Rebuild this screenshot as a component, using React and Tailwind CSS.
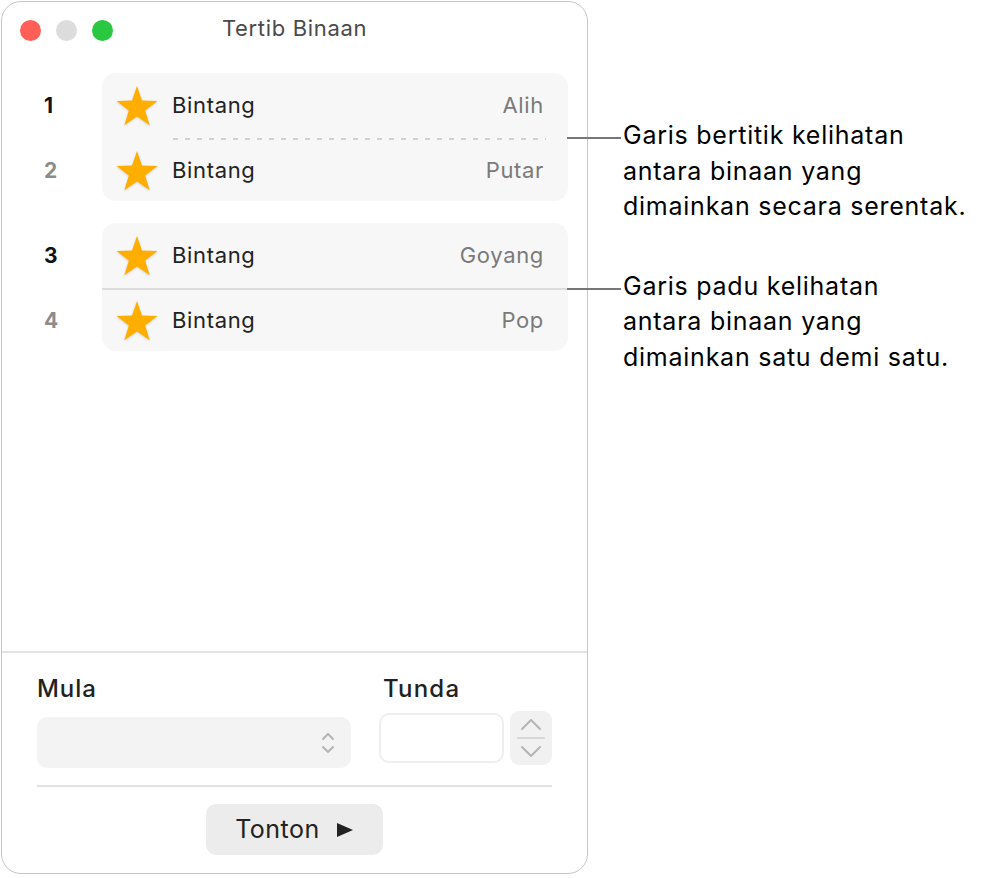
import { Fragment } from 'react';

const font = { fontFamily: 'Inter, "Noto Sans", sans-serif' };

function Star() {
  return (
    <svg width="42" height="40" viewBox="0 0 42 40" className="shrink-0 drop-shadow-[0_1px_1px_rgba(0,0,0,0.15)]">
      <path d="M21 0 L26 14.6 L41.5 14.9 L29.2 24.4 L33.7 39.3 L21 30.4 L8.3 39.3 L12.8 24.4 L0.5 14.9 L16 14.6 Z" fill="#FFAE00" />
    </svg>
  );
}

const groups = [
  {
    dashed: true,
    rows: [
      { n: '1', active: true, name: 'Bintang', fx: 'Alih' },
      { n: '2', active: false, name: 'Bintang', fx: 'Putar' },
    ],
  },
  {
    dashed: false,
    rows: [
      { n: '3', active: true, name: 'Bintang', fx: 'Goyang' },
      { n: '4', active: false, name: 'Bintang', fx: 'Pop' },
    ],
  },
];

function Group({ group }) {
  const heights = ['h-[65px]', 'h-[61px]'];
  return (
    <div className="flex">
      {/* numbers */}
      <div className="w-[100px] flex flex-col">
        {group.rows.map((r, i) => (
          <Fragment key={r.n}>
            <div className={`${heights[i]} flex items-center pl-[42px] text-[21px] font-bold ${r.active ? 'text-[#111]' : 'text-[#8c8c8c]'}`}>
              {r.n}
            </div>
            {i === 0 && <div className="h-[2px]" />}
          </Fragment>
        ))}
      </div>
      {/* card */}
      <div className="w-[466px] rounded-[14px] bg-[#f7f7f7] flex flex-col">
        {group.rows.map((r, i) => (
          <Fragment key={r.n}>
            <div className={`${heights[i]} flex items-center pl-[14px] pr-[24px]`}>
              <Star />
              <span className="ml-[14px] text-[22px] tracking-[0.03em] text-[#222]">{r.name}</span>
              <span className="ml-auto text-[22px] tracking-[0.03em] text-[#7a7a7a]">{r.fx}</span>
            </div>
            {i === 0 &&
              (group.dashed ? (
                <div className="h-[2px] ml-[71px] mr-[22px]">
                  <svg width="100%" height="2" className="block">
                    <line x1="0" y1="1" x2="100%" y2="1" stroke="#c4c4c4" strokeWidth="1.5" strokeDasharray="5 7" />
                  </svg>
                </div>
              ) : (
                <div className="h-[2px] bg-[#dddddd]" />
              ))}
          </Fragment>
        ))}
      </div>
    </div>
  );
}

function Callout({ lines, className }) {
  return (
    <div className={`flex items-start ${className}`}>
      <div className="w-[54px] h-[2px] bg-[#777] shrink-0 mt-[19px]" />
      <div className="ml-[2px] text-[25px] tracking-[0.03em] leading-[35.5px] text-black">
        {lines.map((l) => (
          <div key={l} className="whitespace-nowrap">{l}</div>
        ))}
      </div>
    </div>
  );
}

export default function App() {
  return (
    <div className="w-[987px] h-[878px] bg-white flex items-start" style={font}>
      {/* window */}
      <div className="ml-[1px] mt-[1px] w-[587px] h-[873px] rounded-[20px] border border-[#c6c6c6] bg-white flex flex-col shrink-0 overflow-hidden relative z-0">
        {/* title bar */}
        <div className="h-[54px] flex items-center relative">
          <div className="flex items-center gap-[15px] pl-[18px] pt-[2px]">
            <div className="w-[21px] h-[21px] rounded-full bg-[#ff5f57]" />
            <div className="w-[21px] h-[21px] rounded-full bg-[#dcdcdc]" />
            <div className="w-[21px] h-[21px] rounded-full bg-[#2ac840]" />
          </div>
          <div className="absolute inset-x-0 top-[10px] text-center text-[22px] tracking-[0.03em] text-[#4a4a4a]">Tertib Binaan</div>
        </div>

        {/* build list */}
        <div className="mt-[17px] flex flex-col gap-[22px]">
          {groups.map((g, i) => (
            <Group key={i} group={g} />
          ))}
        </div>

        <div className="flex-1" />

        {/* bottom controls */}
        <div className="h-[2px] bg-[#e3e3e3]" />
        <div className="px-[35px] pt-[20px] pb-[18px]">
          <div className="flex">
            <div className="w-[315px] flex flex-col">
              <div className="text-[24px] font-medium tracking-[0.04em] text-[#222] leading-[32px]">Mula</div>
              <div className="mt-[12px] h-[51px] rounded-[10px] bg-[#f3f3f3] flex items-center justify-end pr-[16px]">
                <svg width="14" height="24" viewBox="0 0 14 24" fill="none" stroke="#b3b3b3" strokeWidth="2" strokeLinecap="round" strokeLinejoin="round">
                  <path d="M2 8 L7 3 L12 8" />
                  <path d="M2 16 L7 21 L12 16" />
                </svg>
              </div>
            </div>
            <div className="ml-[28px] flex flex-col">
              <div className="ml-[4px] text-[24px] font-medium tracking-[0.05em] text-[#222] leading-[32px]">Tunda</div>
              <div className="mt-[6px] flex items-start">
                <div className="mt-[2px] w-[125px] h-[50px] rounded-[10px] border-2 border-[#eeeeee] bg-white" />
                <div className="ml-[6px] w-[42px] h-[54px] rounded-[9px] bg-[#f1f1f1] flex flex-col items-center justify-center">
                  <svg width="30" height="48" viewBox="0 0 30 48" fill="none" stroke="#b5b5b5" strokeWidth="2" strokeLinecap="round" strokeLinejoin="round">
                    <path d="M6 15 L15 6 L24 15" />
                    <line x1="2" y1="24" x2="28" y2="24" stroke="#d6d6d6" />
                    <path d="M6 33 L15 42 L24 33" />
                  </svg>
                </div>
              </div>
            </div>
          </div>
          <div className="mt-[17px] h-[2px] bg-[#e3e3e3]" />
          <div className="mt-[17px] flex justify-center">
            <div className="w-[177px] h-[51px] rounded-[10px] bg-[#ececec] flex items-center justify-center gap-[16px]">
              <span className="text-[25px] tracking-[0.02em] text-[#222]">Tonton</span>
              <svg width="18" height="16" viewBox="0 0 18 16">
                <path d="M1 1 L17 8 L1 15 Z" fill="#222" />
              </svg>
            </div>
          </div>
        </div>
      </div>

      {/* annotations */}
      <div className="-ml-[21px] pt-[118px] relative z-10">
        <Callout lines={['Garis bertitik kelihatan', 'antara binaan yang', 'dimainkan secara serentak.']} />
        <Callout className="mt-[44px]" lines={['Garis padu kelihatan', 'antara binaan yang', 'dimainkan satu demi satu.']} />
      </div>
    </div>
  );
}
